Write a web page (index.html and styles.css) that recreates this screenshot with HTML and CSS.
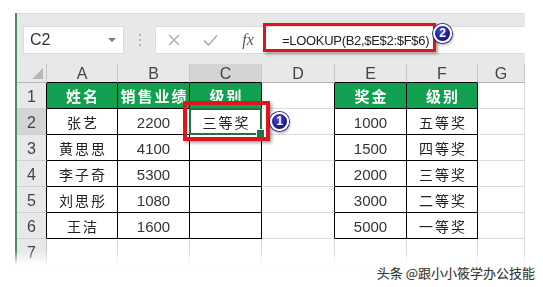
FILE: index.html
```html
<!DOCTYPE html>
<html lang="zh">
<head>
<meta charset="utf-8">
<link rel="stylesheet" href="styles.css">
</head>
<body>
<div class="page">
  <div class="excel">
    <div class="toolbar">
      <div class="namebox"><span>C2</span><span class="dd"></span></div>
      <div class="sep"><i></i><i></i><i></i></div>
      <div class="fbar">
        <span class="ic"><svg width="12" height="12" viewBox="0 0 12 12"><path d="M1 1L11 11M11 1L1 11" stroke="#b3b3b3" stroke-width="1.6" fill="none"/></svg></span>
        <span class="ic"><svg width="15" height="12" viewBox="0 0 15 12"><path d="M1 6.5L5.5 11L14 1.5" stroke="#b3b3b3" stroke-width="1.8" fill="none"/></svg></span>
        <span class="ic fx">fx</span>
        <span class="formula">=LOOKUP(B2,$E$2:$F$6)</span>
      </div>
    </div>
    <div class="sheet">
      <div class="ch corner"><span class="tri"></span></div>
      <div class="ch bk">A</div><div class="ch bk">B</div><div class="ch bk sel">C</div><div class="ch">D</div><div class="ch bk">E</div><div class="ch bk">F</div><div class="ch">G</div>

      <div class="rh rb">1</div>
      <div class="c g">姓名</div><div class="c g">销售业绩</div><div class="c g">级别</div><div class="c rbk"></div><div class="c g">奖金</div><div class="c g">级别</div><div class="c"></div>

      <div class="rh rb sel">2</div>
      <div class="c t zh">张艺</div><div class="c t num">2200</div><div class="c t zh act">三等奖</div><div class="c rbk"></div><div class="c t num">1000</div><div class="c t zh">五等奖</div><div class="c"></div>

      <div class="rh rb">3</div>
      <div class="c t zh">黄思思</div><div class="c t num">4100</div><div class="c t"></div><div class="c rbk"></div><div class="c t num">1500</div><div class="c t zh">四等奖</div><div class="c"></div>

      <div class="rh rb">4</div>
      <div class="c t zh">李子奇</div><div class="c t num">5300</div><div class="c t"></div><div class="c rbk"></div><div class="c t num">2000</div><div class="c t zh">三等奖</div><div class="c"></div>

      <div class="rh rb">5</div>
      <div class="c t zh">刘思彤</div><div class="c t num">1080</div><div class="c t"></div><div class="c rbk"></div><div class="c t num">3000</div><div class="c t zh">二等奖</div><div class="c"></div>

      <div class="rh rb">6</div>
      <div class="c t zh">王洁</div><div class="c t num">1600</div><div class="c t"></div><div class="c rbk"></div><div class="c t num">5000</div><div class="c t zh">一等奖</div><div class="c"></div>

      <div class="rh">7</div>
      <div class="c"></div><div class="c"></div><div class="c"></div><div class="c"></div><div class="c"></div><div class="c"></div><div class="c"></div>
    </div>
  </div>
  <div class="wm">头条 @跟小小筱学办公技能</div>

  <div class="redbox rb2"></div>
  <div class="badge b2">2</div>
  <div class="redbox rb1"></div>
  <div class="badge b1">1</div>
</div>
</body>
</html>
```

FILE: styles.css
```css
* { box-sizing: border-box; margin: 0; padding: 0; }
html, body { background: #fff; }
body { width: 543px; height: 287px; overflow: hidden; font-family: "Liberation Sans", "Noto Sans CJK SC", sans-serif; }

.page { position: relative; padding-top: 13px; height: 287px; }

.excel {
  margin-left: 15px;
  width: 510px;
  border-left: 2px solid #4f8c63;
  background: #e8e8e8;
  -webkit-mask-image: linear-gradient(to bottom, #000 calc(100% - 14px), transparent);
  mask-image: linear-gradient(to bottom, #000 calc(100% - 14px), transparent);
}

.toolbar {
  display: flex;
  align-items: center;
  padding: 12px 0 10px 6px;
  border-top: 1px solid #dcdcdc;
}

.namebox {
  width: 101px;
  height: 28px;
  background: #fff;
  border: 1px solid #dcdcdc;
  display: flex;
  align-items: center;
  padding-left: 6px;
  font-size: 16px;
  color: #333;
}
.dd {
  margin-left: auto;
  margin-right: 7px;
  width: 0; height: 0;
  border-left: 4px solid transparent;
  border-right: 4px solid transparent;
  border-top: 4px solid #7a7a7a;
}

.sep {
  width: 31px;
  display: flex;
  flex-direction: column;
  align-items: center;
  gap: 3px;
}
.sep i { width: 2px; height: 2px; background: #b5b5b5; display: block; }

.fbar {
  flex: 1;
  height: 28px;
  background: #fff;
  border: 1px solid #dcdcdc;
  border-right: none;
  display: flex;
  align-items: center;
}
.ic { width: 36px; display: flex; justify-content: center; align-items: center; }
.fx {
  width: 40px;
  font-family: "Liberation Serif", serif;
  font-style: italic;
  font-size: 16px;
  color: #555;
}
.formula {
  padding-left: 14px;
  font-size: 13px;
  letter-spacing: -0.3px;
  color: #222;
}

.sheet {
  display: grid;
  grid-template-columns: 30px 71px 72px 72px 73px 72px 71px 47px;
  grid-template-rows: 19px repeat(7, 26px);
  background: #fff;
}

.ch {
  background: #e8e8e8;
  border-right: 1px solid #c6c6c6;
  border-bottom: 1px solid #b5b5b5;
  display: flex;
  align-items: center;
  justify-content: center;
  font-size: 16px;
  color: #444;
  padding-top: 1px;
}
.ch.bk { border-bottom-color: #000; }
.ch.sel { background: #d4d4d4; }
.corner { position: relative; }
.tri {
  position: absolute;
  right: 3px; bottom: 3px;
  width: 0; height: 0;
  border-left: 11px solid transparent;
  border-bottom: 11px solid #b8b8b8;
}

.rh {
  background: #e8e8e8;
  border-right: 1px solid #c6c6c6;
  border-bottom: 1px solid #cfcfcf;
  display: flex;
  align-items: flex-end;
  justify-content: center;
  padding-bottom: 2px;
  font-size: 16px;
  color: #444;
}
.rh.rb { border-right-color: #000; }
.rh.sel { background: #d4d4d4; }

.c {
  background: #fff;
  border-right: 1px solid #dadada;
  border-bottom: 1px solid #dadada;
  display: flex;
  align-items: center;
  justify-content: center;
  color: #222;
}
.t { border-right-color: #000; border-bottom-color: #000; }
.rbk { border-right-color: #000; }
.g {
  background: #11a04f;
  color: #fff;
  font-family: "Noto Sans CJK SC", sans-serif;
  font-weight: 700;
  font-size: 15px;
  letter-spacing: 2px;
  border-right-color: #000;
  border-bottom-color: #000;
  padding-left: 2px;
}
.zh {
  font-family: "Noto Sans CJK SC", sans-serif;
  font-size: 14px;
  letter-spacing: 2px;
  padding-left: 2px;
  color: #222;
}
.num { font-size: 15px; color: #333; padding-top: 1px; }

.act { position: relative; }
.act::after {
  content: "";
  position: absolute;
  top: -1px; left: -1px; right: -1px; bottom: -1px;
  border: 2px solid #217346;
}
.act::before {
  content: "";
  position: absolute;
  right: -4px; bottom: -4px;
  width: 7px; height: 7px;
  background: #217346;
  border: 1px solid #fff;
  z-index: 2;
}

.wm {
  text-align: right;
  padding-right: 8px;
  font-family: "Noto Sans CJK SC", sans-serif;
  font-size: 13px;
  line-height: 16px;
  color: #333;
  text-shadow: 0 0 2px #fff, 0 0 1px rgba(0,0,0,.25);
}

.redbox {
  position: absolute;
  border: 4px solid #e0141c;
  box-shadow: 2px 2px 3px rgba(0,0,0,.35);
}
.rb2 { left: 263px; top: 23px; width: 173px; height: 29px; border-width: 3px; }
.rb1 { left: 183px; top: 101px; width: 87px; height: 40px; }

.badge {
  position: absolute;
  width: 19px; height: 19px;
  border-radius: 50%;
  background: radial-gradient(circle at 40% 35%, #4a4ad8, #15158a 70%);
  border: 2px solid #fff;
  box-shadow: 0 0 0 1px #2c2c7a, 1px 2px 3px rgba(0,0,0,.4);
  color: #fff;
  font: bold 12px/15px "Liberation Sans", sans-serif;
  text-align: center;
}
.b2 { left: 433px; top: 24px; }
.b1 { left: 270px; top: 112px; }
```
